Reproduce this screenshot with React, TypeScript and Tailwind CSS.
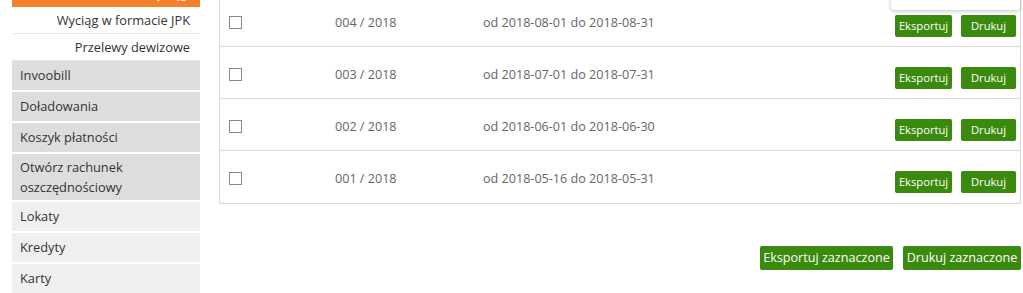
import React from "react";

const subItems = ["Wyciąg w formacie JPK", "Przelewy dewizowe"];
const darkItems = ["Invoobill", "Doładowania", "Koszyk płatności", "Otwórz rachunek oszczędnościowy"];
const lightItems = ["Lokaty", "Kredyty", "Karty"];

const rows = [
  { no: "004 / 2018", period: "od 2018-08-01 do 2018-08-31" },
  { no: "003 / 2018", period: "od 2018-07-01 do 2018-07-31" },
  { no: "002 / 2018", period: "od 2018-06-01 do 2018-06-30" },
  { no: "001 / 2018", period: "od 2018-05-16 do 2018-05-31" },
];

function Sidebar() {
  return (
    <div className="w-[188px] ml-[12px] -mt-[21px] flex flex-col text-[12.8px] text-[#333]">
      <div className="h-[28px] bg-[#f5822a] text-white text-right pr-[10px] leading-[28px]">Wyciągi</div>
      {subItems.map((s) => (
        <div key={s} className="h-[27px] bg-white border-b border-[#e6e6e6] text-right pr-[10px] leading-[26px]">
          {s}
        </div>
      ))}
      {darkItems.map((s) => (
        <div
          key={s}
          className={`bg-[#dddddd] border-b-2 border-white px-[8px] ${s.startsWith("Otwórz") ? "py-[3px] pr-[30px] leading-[20px]" : "py-[4px] leading-[21px]"}`}
        >
          {s}
        </div>
      ))}
      {lightItems.map((s) => (
        <div key={s} className="bg-[#efefef] border-b-2 border-white px-[8px] py-[4px] leading-[21px]">
          {s}
        </div>
      ))}
    </div>
  );
}

function Btn({ children, w, big }: { children: React.ReactNode; w: string; big?: boolean }) {
  return (
    <button
      className={`${w} ${
        big ? "h-[24px] text-[12.6px] leading-[24px]" : "h-[22px] text-[11.2px] leading-[22px]"
      } bg-[#3a8a0e] text-white rounded-[2px] text-center whitespace-nowrap`}
    >
      {children}
    </button>
  );
}

export default function App() {
  return (
    <div className="relative w-[1023px] h-[293px] overflow-hidden bg-white" style={{ fontFamily: '"Open Sans", "Noto Sans", sans-serif' }}>
      <div className="flex items-start">
        <Sidebar />
        <div className="ml-[19px] w-[802px] -mt-[5px] flex flex-col">
          <div className="border-x border-b border-[#d9d9d9]">
            {rows.map((r, i) => (
              <div
                key={r.no}
                className={`flex items-start h-[52px] pt-[20px] text-[12.6px] text-[#666] ${i < rows.length - 1 ? "border-b border-[#d9d9d9]" : ""}`}
              >
                <div className="w-[115px] pl-[9px] pt-px">
                  <div className="w-[13px] h-[13px] border border-[#8a8a8a] bg-white" />
                </div>
                <div className="w-[148px] -mt-[2px] leading-[20px]">{r.no}</div>
                <div className="flex-1 -mt-[2px] leading-[20px]">{r.period}</div>
                <div className="flex gap-[9px] pr-[4px]">
                  <Btn w="w-[57px]">Eksportuj</Btn>
                  <Btn w="w-[55px]">Drukuj</Btn>
                </div>
              </div>
            ))}
          </div>
          <div className="flex justify-end gap-[10px] mt-[42px]">
            <Btn big w="w-[133px]">Eksportuj zaznaczone</Btn>
            <Btn big w="w-[118px]">Drukuj zaznaczone</Btn>
          </div>
        </div>
      </div>
      <div className="absolute right-[3px] -top-[20px] w-[129px] h-[30px] bg-white rounded-[3px] shadow-[0_1px_4px_rgba(0,0,0,0.25)] text-[13px] text-[#333] pl-[19px] leading-[30px]">
        XML
      </div>
    </div>
  );
}
